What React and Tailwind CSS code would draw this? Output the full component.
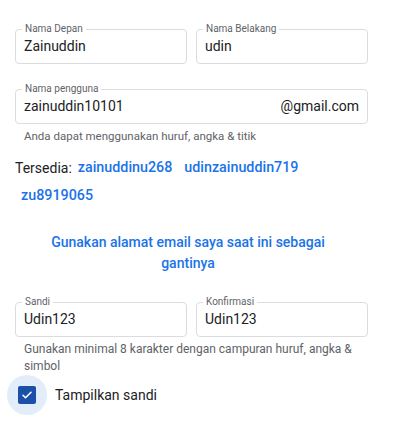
import React from "react";

function Field({ label, value, width, suffix }) {
  return (
    <div
      className={`relative h-[35px] ${width} border border-[#dadce0] rounded-[4px] flex items-center justify-between pl-[8px] pr-[8px] text-[14px] text-[#202124]`}
    >
      <span className="absolute left-[6px] top-[-7px] bg-white px-[3px] text-[10px] leading-[12px] text-[#5f6368]">
        {label}
      </span>
      <span>{value}</span>
      {suffix && <span>{suffix}</span>}
    </div>
  );
}

export default function App() {
  return (
    <div className="w-[404px] h-[441px] bg-white font-['Roboto',sans-serif] pt-[29px] pl-[15px]">
      <div className="flex gap-[9px] w-[353px]">
        <Field label="Nama Depan" value="Zainuddin" width="w-[172px]" />
        <Field label="Nama Belakang" value="udin" width="w-[172px]" />
      </div>
      <div className="mt-[25px] w-[353px]">
        <Field label="Nama pengguna" value="zainuddin10101" suffix="@gmail.com" width="w-[353px]" />
      </div>
      <div className="mt-[5px] pl-[9px] text-[11.5px] leading-[14px] text-[#5f6368]">
        Anda dapat menggunakan huruf, angka &amp; titik
      </div>
      <div className="mt-[11px] flex flex-wrap items-center w-[353px] text-[14px]">
        <span className="h-[28px] flex items-center text-[#202124]">Tersedia:</span>
        <span className="h-[28px] flex items-center px-[6px] text-[14.3px] font-medium text-[#1a73e8]">zainuddinu268</span>
        <span className="h-[28px] flex items-center px-[6px] text-[14.3px] font-medium text-[#1a73e8]">udinzainuddin719</span>
        <span className="h-[28px] flex items-center px-[6px] text-[14.3px] font-medium text-[#1a73e8]">zu8919065</span>
      </div>
      <div className="mt-[22px] w-[346px] text-center text-[14px] leading-[21px] font-medium text-[#1a73e8]">
        Gunakan alamat email saya saat ini sebagai
        <br />
        gantinya
      </div>
      <div className="mt-[28px] flex gap-[9px] w-[353px]">
        <Field label="Sandi" value="Udin123" width="w-[172px]" />
        <Field label="Konfirmasi" value="Udin123" width="w-[172px]" />
      </div>
      <div className="mt-[4px] pl-[9px] w-[353px] text-[12px] leading-[17px] text-[#5f6368]">
        Gunakan minimal 8 karakter dengan campuran huruf, angka &amp; simbol
      </div>
      <div className="flex items-center ml-[-8px]">
        <div className="w-[40px] h-[40px] rounded-full bg-[#e3edfa] flex items-center justify-center">
          <div className="w-[18px] h-[18px] rounded-[2px] bg-[#1c4fa8] flex items-center justify-center">
            <svg width="12" height="12" viewBox="0 0 24 24" fill="none">
              <path d="M4 12.5l5 5L20 6.5" stroke="white" strokeWidth="3.2" strokeLinecap="round" strokeLinejoin="round" />
            </svg>
          </div>
        </div>
        <span className="ml-[8px] text-[14px] text-[#202124]">Tampilkan sandi</span>
      </div>
    </div>
  );
}
